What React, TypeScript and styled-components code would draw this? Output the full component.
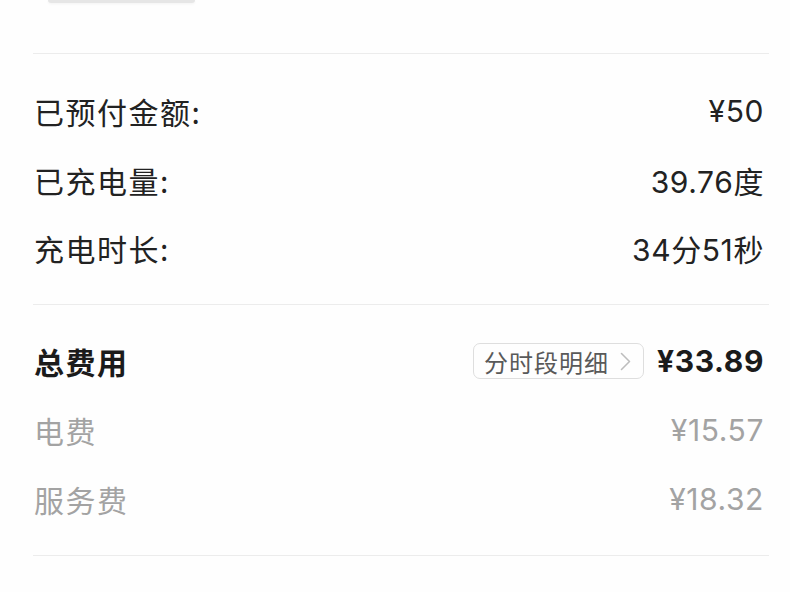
import React from 'react';
import styled, { createGlobalStyle } from 'styled-components';

const GlobalStyle = createGlobalStyle`
    html, body {
        margin: 0;
        padding: 0;
        background: #fefefe;
    }
    body {
        font-family: "Noto Sans CJK SC", "Noto Sans", sans-serif;
        -webkit-font-smoothing: antialiased;
    }
`;

const Page = styled.div`
    width: 790px;
    height: 592px;
    overflow: hidden;
    background: #fefefe;
    display: flex;
    flex-direction: column;
`;

const TopTab = styled.div`
    width: 147px;
    height: 3px;
    margin-left: 48px;
    background: #e6e6e6;
    border-radius: 0 0 3px 3px;
    box-shadow: 0 1px 3px rgba(0, 0, 0, 0.05);
`;

const Divider = styled.div<{ top?: number }>`
    height: 1px;
    margin: ${props => props.top ?? 0}px 21px 0 33px;
    background: #ececec;
`;

const Section = styled.div<{ pad?: number }>`
    display: flex;
    flex-direction: column;
    padding: ${props => props.pad ?? 23}px 26px 21px 34px;
`;

const Row = styled.div<{ h?: number }>`
    display: flex;
    align-items: center;
    justify-content: space-between;
    height: ${props => props.h ?? 68.5}px;
`;

type Tone = 'normal' | 'strong' | 'muted';

const toneColor = (tone?: Tone) => {
    if (tone === 'strong') return '#1b1b1b';
    if (tone === 'muted') return '#a3a3a3';
    return '#222';
};

const Label = styled.div<{ tone?: Tone }>`
    font-family: "Noto Sans CJK SC", sans-serif;
    font-size: 30px;
    letter-spacing: 1.5px;
    font-weight: ${props => props.tone === 'strong' ? 700 : 400};
    color: ${props => toneColor(props.tone)};
`;

const Value = styled.div<{ tone?: Tone }>`
    font-family: "Inter", "Noto Sans CJK SC", sans-serif;
    font-size: 30px;
    letter-spacing: 0.6px;
    font-weight: ${props => props.tone === 'strong' ? 700 : 400};
    color: ${props => toneColor(props.tone)};
`;

const Right = styled.div`
    display: flex;
    align-items: center;
    gap: 13px;
`;

const DetailButton = styled.div`
    display: flex;
    align-items: center;
    gap: 11px;
    height: 34px;
    padding: 0 12px 0 10px;
    border: 1px solid #dedede;
    border-radius: 7px;
    font-family: "Noto Sans CJK SC", sans-serif;
    font-size: 24px;
    letter-spacing: 1px;
    color: #595959;
`;

const Chevron = () => (
    <svg width="11" height="19" viewBox="0 0 11 19" fill="none">
        <path d="M1.5 1.5 L9.5 9.5 L1.5 17.5" stroke="#bdbdbd" strokeWidth="1.6" strokeLinecap="round" strokeLinejoin="round" />
    </svg>
);

const summary = [
    { label: '已预付金额:', value: '¥50' },
    { label: '已充电量:', value: '39.76度' },
    { label: '充电时长:', value: '34分51秒' },
];

const fees = [
    { label: '电费', value: '¥15.57' },
    { label: '服务费', value: '¥18.32' },
];

export default function App() {
    return (
        <Page>
            <GlobalStyle />
            <TopTab />
            <Divider top={50} />
            <Section>
                {summary.map(item => (
                    <Row key={item.label}>
                        <Label>{item.label}</Label>
                        <Value>{item.value}</Value>
                    </Row>
                ))}
            </Section>
            <Divider />
            <Section pad={22}>
                <Row h={69}>
                    <Label tone="strong">总费用</Label>
                    <Right>
                        <DetailButton>
                            分时段明细
                            <Chevron />
                        </DetailButton>
                        <Value tone="strong">¥33.89</Value>
                    </Right>
                </Row>
                {fees.map(item => (
                    <Row key={item.label} h={69}>
                        <Label tone="muted">{item.label}</Label>
                        <Value tone="muted">{item.value}</Value>
                    </Row>
                ))}
            </Section>
            <Divider />
        </Page>
    );
}
